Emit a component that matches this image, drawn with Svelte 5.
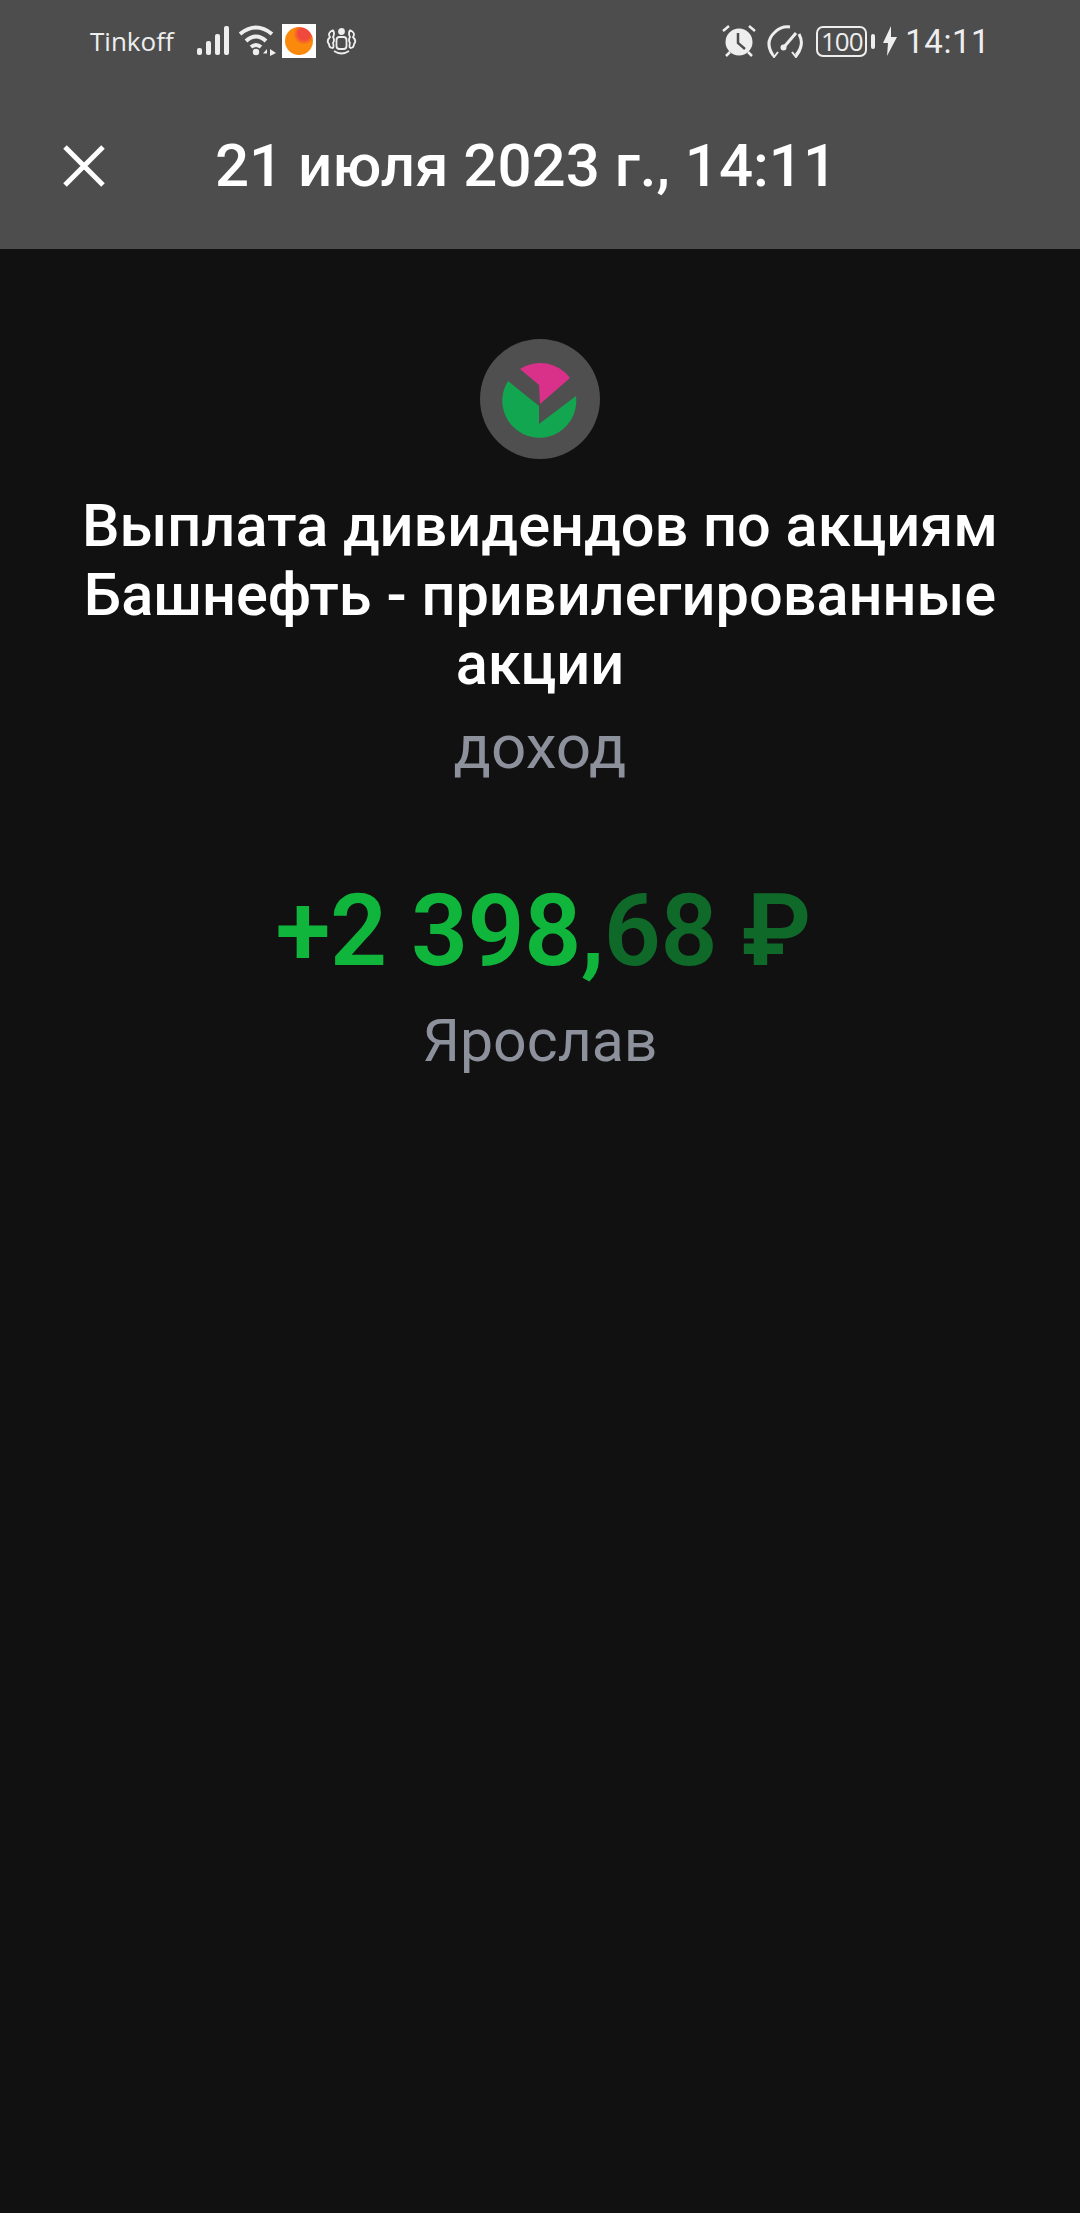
<script>
	const title = 'Выплата дивидендов по акциям Башнефть - привилегированные акции';
</script>

<div class="screen">
	<header>
		<div class="status">
			<div class="side">
				<span class="carrier">Tinkoff</span>
				<svg class="signal" width="33" height="30" viewBox="0 0 33 30" fill="#eee">
					<rect x="0" y="22" width="5" height="7" rx="2" />
					<rect x="9" y="15" width="5" height="14" rx="2" />
					<rect x="18" y="8" width="5" height="21" rx="2" />
					<rect x="27" y="0" width="5" height="29" rx="2" />
				</svg>
				<svg class="wifi" width="38" height="32" viewBox="0 0 38 32" fill="none" stroke="#eee" stroke-width="4">
					<path d="M1 9Q17-4 33 9" />
					<path d="M7 16Q17 7 27 16" />
					<path d="M12 22Q17 18 22 22" />
					<circle cx="17" cy="27" r="3.2" fill="#eee" stroke="none" />
					<path d="M28 31V24L24 28.500H28M31 24V31L37 28Z" fill="#eee" stroke="none" />
				</svg>
				<span class="app-icon"><i></i></span>
				<svg class="emblem" width="31" height="27" viewBox="0 0 31 27" fill="none" stroke="#eee" stroke-width="1.8">
					<circle cx="15.500" cy="3.500" r="2.500" fill="#eee" />
					<rect x="10.500" y="9" width="10" height="12" rx="3" />
					<path d="M7 2Q1 5 4 9Q0 13 3 16Q3 20 7 20M7 2Q9 6 7 9Q9 12 7 15Q8 18 7 20" />
					<path d="M24 2Q30 5 27 9Q31 13 28 16Q28 20 24 20M24 2Q22 6 24 9Q22 12 24 15Q23 18 24 20" />
					<path d="M8 23Q15.500 28 23 23" />
				</svg>
			</div>
			<div class="side">
				<svg class="alarm" width="34" height="32" viewBox="0 0 34 32">
					<circle cx="17" cy="17" r="13.500" fill="#eee" />
					<path d="M16 8V18L23 24" fill="none" stroke="#4d4d4d" stroke-width="2.500" />
					<path d="M1 6L7 1M33 6L27 1M4 31L8 27M30 31L26 27" stroke="#eee" stroke-width="2.500" />
				</svg>
				<svg class="gauge" width="36" height="33" viewBox="0 0 36 33" fill="none" stroke="#eee" stroke-width="3">
					<path d="M6 30Q-3 17 8 7Q14 1 23 2" />
					<path d="M29 30Q38 20 32 9" />
					<path d="M3 26L7 32L11 27M25 27L29 32L33 26" stroke-width="2" />
					<path d="M17 22L29 8" />
					<circle cx="16.500" cy="22.500" r="3" fill="#eee" stroke="none" />
				</svg>
				<span class="battery"><span class="level">100</span><i></i></span>
				<svg class="bolt" width="14" height="30" viewBox="0 0 14 30" fill="#eee">
					<path d="M8 0L0 17H5L4 30L14 11H8Z" />
				</svg>
				<span class="clock">14:11</span>
			</div>
		</div>
		<div class="toolbar">
			<svg class="close" width="42" height="42" viewBox="0 0 42 42" stroke="#fff" stroke-width="5">
				<path d="M2 2L40 40M40 2L2 40" />
			</svg>
			<h2>21 июля 2023 г., 14:11</h2>
		</div>
	</header>

	<main>
		<div class="logo">
			<svg width="120" height="120" viewBox="0 0 120 120">
				<path fill="#d9308a" d="M40 30A37 37 0 0 1 90 39L60 65L59 46Z" />
				<path fill="#12a650" d="M28 42L59 67V85L96 57A37 37 0 1 1 28 42Z" />
			</svg>
		</div>
		<h1>{title}</h1>
		<p class="kind">доход</p>
		<p class="amount">+2 398,<span>68 ₽</span></p>
		<p class="account">Ярослав</p>
	</main>
</div>

<style>
	:global(body) {
		margin: 0;
		background: #111112;
	}
	.screen {
		height: 2213px;
		display: flex;
		flex-direction: column;
		font-family: Roboto, 'Liberation Sans', sans-serif;
		background: #111112;
		overflow: hidden;
	}
	header {
		height: 249px;
		background: #4d4d4d;
		flex-shrink: 0;
	}
	.status {
		height: 82px;
		padding: 0 90px;
		display: flex;
		justify-content: space-between;
		align-items: center;
		color: #eee;
	}
	.side {
		display: flex;
		align-items: center;
	}
	.carrier {
		width: 107px;
		font-size: 26px;
		font-family: 'Open Sans', sans-serif;
	}
	.wifi {
		margin-left: 9px;
	}
	.app-icon {
		width: 34px;
		height: 34px;
		background: #fff;
		margin-left: 5px;
		display: flex;
		align-items: center;
		justify-content: center;
	}
	.app-icon i {
		width: 28px;
		height: 28px;
		border-radius: 50%;
		background: radial-gradient(circle at 68% 25%, #f0483c 0 20%, #fb8a0c 38%);
	}
	.emblem {
		margin-left: 10px;
	}
	.gauge {
		margin-left: 11px;
	}
	.battery {
		display: flex;
		align-items: center;
		margin-left: 13px;
	}
	.level {
		box-sizing: border-box;
		width: 51px;
		height: 31px;
		border: 2.5px solid #eee;
		border-radius: 7px;
		font-size: 26px;
		line-height: 26px;
		text-align: center;
		font-family: 'Open Sans', sans-serif;
		letter-spacing: -1px;
	}
	.battery i {
		width: 4px;
		height: 15px;
		background: #eee;
		border-radius: 2px;
		margin-left: 4px;
	}
	.bolt {
		margin-left: 8px;
	}
	.clock {
		font-size: 33px;
		margin-left: 8px;
		letter-spacing: 0.5px;
	}
	.toolbar {
		height: 167px;
		padding: 0 0 0 63px;
		box-sizing: border-box;
		display: flex;
		align-items: center;
	}
	.close {
		margin-right: 110px;
		flex-shrink: 0;
	}
	h2 {
		margin: 0;
		color: #fff;
		font-size: 60px;
		font-weight: 500;
		white-space: nowrap;
	}
	main {
		padding: 90px 40px 0;
		display: flex;
		flex-direction: column;
		align-items: center;
		text-align: center;
	}
	.logo {
		width: 120px;
		height: 120px;
		border-radius: 50%;
		background: #4f4f4f;
	}
	.logo svg {
		display: block;
	}
	h1 {
		margin: 33px 0 0;
		color: #fff;
		font-size: 59.5px;
		line-height: 69px;
		font-weight: 500;
	}
	p {
		margin: 0;
	}
	.kind {
		color: #8c919c;
		font-size: 62px;
		line-height: 72px;
		margin-top: 12px;
	}
	.amount {
		margin: 90px 0 0 6px;
		color: #10b63c;
		font-size: 100px;
		line-height: 116px;
		font-weight: 600;
		letter-spacing: -0.5px;
	}
	.amount span {
		color: #0f6a2a;
	}
	.account {
		color: #8c919c;
		font-size: 59px;
		line-height: 70px;
		margin-top: 17px;
	}
</style>
